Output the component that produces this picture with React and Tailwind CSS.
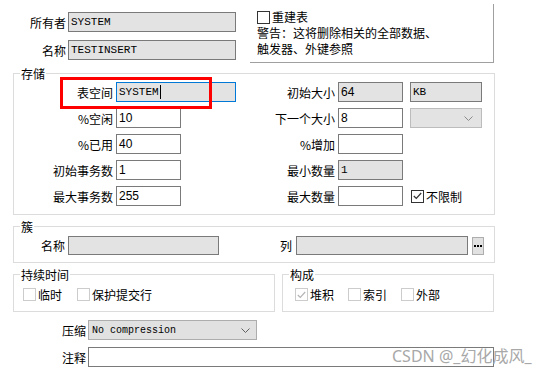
const cjk = { fontFamily: '"Noto Sans CJK SC", "Noto Sans", sans-serif' }
const mono = { fontFamily: '"Liberation Mono", "DejaVu Sans Mono", monospace' }
const sans = { fontFamily: '"Liberation Sans", Arial, sans-serif' }

function Input({ w, value = '', disabled, serif, focus, h = 'h-[20px]' }) {
  return (
    <div
      className={`${w} ${h} shrink-0 border flex items-center pl-[2px] text-[12px] leading-none overflow-hidden ${
        focus ? 'border-[#0078d7]' : 'border-[#7a7a7a]'
      } ${disabled || focus ? 'bg-[#e3e3e3]' : 'bg-white'}`}
      style={serif ? mono : sans}
    >
      <span className={serif ? 'text-[11px]' : ''}>{value}</span>
      {focus && <span className="w-px h-[14px] bg-black ml-px" />}
    </div>
  )
}

function Chevron({ color = '#606060' }) {
  return (
    <svg width="9" height="5" viewBox="0 0 9 5" className="shrink-0">
      <path d="M0.5 0.5 L4.5 4.5 L8.5 0.5" fill="none" stroke={color} strokeWidth="1" />
    </svg>
  )
}

function Check({ checked, light }) {
  return (
    <div
      className={`w-[13px] h-[13px] shrink-0 border bg-white flex items-center justify-center ${
        light ? 'border-[#cccccc]' : 'border-[#333333]'
      }`}
    >
      {checked && (
        <svg width="9" height="8" viewBox="0 0 9 8">
          <path
            d="M0.8 4 L3.3 6.5 L8.2 1"
            fill="none"
            stroke={light ? '#b5b5b5' : '#333333'}
            strokeWidth="1.2"
          />
        </svg>
      )}
    </div>
  )
}

function Label({ w, children }) {
  return <div className={`${w} shrink-0 text-right whitespace-nowrap`}>{children}</div>
}

function Row({ left, right }) {
  return (
    <div className="flex items-center h-[20px]">
      <div className="w-[236px] shrink-0 flex items-center">{left}</div>
      <div className="flex items-center">{right}</div>
    </div>
  )
}

export default function App() {
  return (
    <div
      className="relative w-[557px] h-[373px] bg-white text-black text-[12px] leading-[15px] overflow-hidden"
      style={cjk}
    >
      {/* top */}
      <div className="flex h-[63px]">
        <div className="pt-[12px] flex flex-col gap-[8px]">
          <div className="flex items-center">
            <Label w="w-[66px]">所有者</Label>
            <div className="ml-[2px]">
              <Input w="w-[168px]" value="SYSTEM" disabled serif />
            </div>
          </div>
          <div className="flex items-center">
            <Label w="w-[66px]">名称</Label>
            <div className="ml-[2px]">
              <Input w="w-[168px]" value="TESTINSERT" disabled serif />
            </div>
          </div>
        </div>
        <div className="mt-[4px] ml-[14px] w-[244px] h-[59px] border-r border-b border-[#a0a0a0] pl-[7px] pt-[5px] leading-[16px]">
          <div className="flex items-center gap-[2px]">
            <Check />
            <span>重建表</span>
          </div>
          <div>警告：这将删除相关的全部数据、</div>
          <div>触发器、外键参照</div>
        </div>
      </div>

      {/* 存储 */}
      <fieldset className="mt-[3px] ml-[13px] w-[482px] border border-[#dcdcdc] pt-[1px] pb-[8px]">
        <legend className="ml-[6px] px-[1px] leading-[15px]">存储</legend>
        <div className="flex flex-col gap-[6px]">
          <Row
            left={
              <>
                <Label w="w-[99px]">表空间</Label>
                <div className="ml-[3px]">
                  <Input w="w-[120px]" value="SYSTEM" serif focus />
                </div>
              </>
            }
            right={
              <>
                <Label w="w-[85px]">初始大小</Label>
                <div className="ml-[3px]">
                  <Input w="w-[65px]" value="64" disabled />
                </div>
                <div className="ml-[7px]">
                  <Input w="w-[72px]" value="KB" disabled serif />
                </div>
              </>
            }
          />
          <Row
            left={
              <>
                <Label w="w-[99px]">%空闲</Label>
                <div className="ml-[3px]">
                  <Input w="w-[65px]" value="10" />
                </div>
              </>
            }
            right={
              <>
                <Label w="w-[85px]">下一个大小</Label>
                <div className="ml-[3px]">
                  <Input w="w-[65px]" value="8" />
                </div>
                <div className="ml-[7px] w-[72px] h-[20px] border border-[#bcbcbc] bg-[#e3e3e3] flex items-center justify-end pr-[8px]">
                  <Chevron color="#8a8a8a" />
                </div>
              </>
            }
          />
          <Row
            left={
              <>
                <Label w="w-[99px]">%已用</Label>
                <div className="ml-[3px]">
                  <Input w="w-[65px]" value="40" />
                </div>
              </>
            }
            right={
              <>
                <Label w="w-[85px]">%增加</Label>
                <div className="ml-[3px]">
                  <Input w="w-[65px]" />
                </div>
              </>
            }
          />
          <Row
            left={
              <>
                <Label w="w-[99px]">初始事务数</Label>
                <div className="ml-[3px]">
                  <Input w="w-[65px]" value="1" />
                </div>
              </>
            }
            right={
              <>
                <Label w="w-[85px]">最小数量</Label>
                <div className="ml-[3px]">
                  <Input w="w-[65px]" value="1" disabled serif />
                </div>
              </>
            }
          />
          <Row
            left={
              <>
                <Label w="w-[99px]">最大事务数</Label>
                <div className="ml-[3px]">
                  <Input w="w-[65px]" value="255" />
                </div>
              </>
            }
            right={
              <>
                <Label w="w-[85px]">最大数量</Label>
                <div className="ml-[3px]">
                  <Input w="w-[65px]" />
                </div>
                <div className="ml-[8px] flex items-center gap-[2px]">
                  <Check checked />
                  <span>不限制</span>
                </div>
              </>
            }
          />
        </div>
      </fieldset>

      {/* 簇 */}
      <fieldset className="mt-[4px] ml-[13px] w-[482px] border border-[#dcdcdc] pt-[2px] pb-[7px]">
        <legend className="ml-[6px] px-[1px] leading-[15px]">簇</legend>
        <div className="flex items-center h-[19px]">
          <Label w="w-[51px]">名称</Label>
          <div className="ml-[3px]">
            <Input w="w-[151px]" h="h-[19px]" disabled />
          </div>
          <div className="ml-[61px] w-[12px]">列</div>
          <div className="ml-[4px]">
            <Input w="w-[172px]" h="h-[19px]" disabled />
          </div>
          <div className="ml-[4px] w-[12px] h-[18px] border border-[#adadad] bg-[#e1e1e1] flex items-center justify-center gap-px">
            <span className="w-[2px] h-[2px] bg-black" />
            <span className="w-[2px] h-[2px] bg-black" />
            <span className="w-[2px] h-[2px] bg-black" />
          </div>
        </div>
      </fieldset>

      {/* 持续时间 / 构成 */}
      <div className="mt-[4px] ml-[13px] flex gap-[7px]">
        <fieldset className="w-[262px] border border-[#dcdcdc] pt-[6px] pb-[10px] pl-[9px]">
          <legend className="ml-[-3px] px-[1px] leading-[15px]">持续时间</legend>
          <div className="flex items-center h-[13px]">
            <Check light />
            <span className="ml-[2px]">临时</span>
            <div className="ml-[15px]">
              <Check light />
            </div>
            <span className="ml-[2px]">保护提交行</span>
          </div>
        </fieldset>
        <fieldset className="w-[212px] border border-[#dcdcdc] pt-[6px] pb-[10px] pl-[12px]">
          <legend className="ml-[-6px] px-[1px] leading-[15px]">构成</legend>
          <div className="flex items-center h-[13px]">
            <Check checked light />
            <span className="ml-[2px]">堆积</span>
            <div className="ml-[14px]">
              <Check light />
            </div>
            <span className="ml-[2px]">索引</span>
            <div className="ml-[14px]">
              <Check light />
            </div>
            <span className="ml-[2px]">外部</span>
          </div>
        </fieldset>
      </div>

      {/* 压缩 / 注释 */}
      <div className="mt-[8px] flex items-center h-[20px]">
        <Label w="w-[86px]">压缩</Label>
        <div
          className="ml-[2px] w-[169px] h-[20px] border border-[#adadad] bg-[#e1e1e1] flex items-center justify-between pl-[3px] pr-[6px]"
          style={mono}
        >
          <span className="text-[10px]">No compression</span>
          <Chevron />
        </div>
      </div>
      <div className="mt-[7px] flex items-center h-[20px]">
        <Label w="w-[86px]">注释</Label>
        <div className="ml-[2px]">
          <Input w="w-[406px]" />
        </div>
      </div>

      {/* annotation */}
      <div className="absolute left-[60px] top-[77px] w-[152px] h-[32px] border-[3px] border-[#ff0000]" />
      <div
        className="absolute left-[392px] top-[347px] text-[16px] leading-[18px] text-[#a8a8a8] whitespace-nowrap"
        style={{ fontFamily: '"Noto Sans", "Noto Sans CJK SC", sans-serif' }}
      >
        CSDN @_幻化成风_
      </div>
    </div>
  )
}
